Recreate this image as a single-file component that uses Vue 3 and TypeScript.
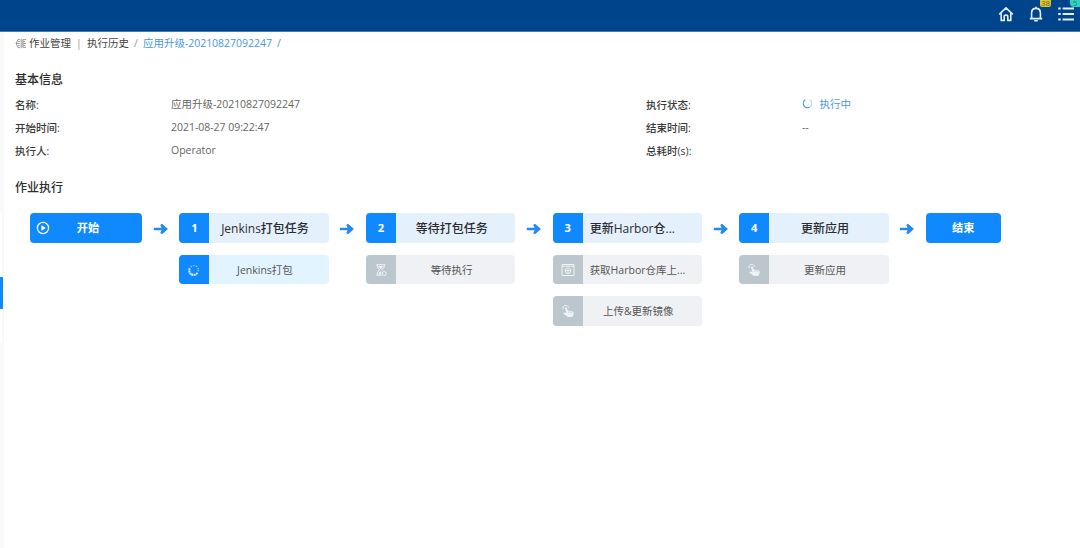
<script setup lang="ts">
interface Task {
  name: string
  icon: 'spin' | 'wait' | 'box' | 'hand'
  active?: boolean
  long?: boolean
}

interface Stage {
  title: string
  long?: boolean
  tasks: Task[]
}

const leftInfo = [
  { label: '名称:', value: '应用升级-20210827092247' },
  { label: '开始时间:', value: '2021-08-27 09:22:47' },
  { label: '执行人:', value: 'Operator' },
]

const rightInfo = [
  { label: '执行状态:', value: '执行中', running: true },
  { label: '结束时间:', value: '--', running: false },
  { label: '总耗时(s):', value: '', running: false },
]

const stages: Stage[] = [
  { title: 'Jenkins打包任务', tasks: [{ name: 'Jenkins打包', icon: 'spin', active: true }] },
  { title: '等待打包任务', tasks: [{ name: '等待执行', icon: 'wait' }] },
  {
    title: '更新Harbor仓...',
    long: true,
    tasks: [
      { name: '获取Harbor仓库上...', icon: 'box', long: true },
      { name: '上传&更新镜像', icon: 'hand' },
    ],
  },
  { title: '更新应用', tasks: [{ name: '更新应用', icon: 'hand' }] },
]
</script>

<template>
  <div class="page">
    <header class="topbar">
      <svg class="top-icon" viewBox="0 0 16 16">
        <path d="M1.2 8.4 8 1.9l6.8 6.5M3.2 7.2v7.2h3V10.6q0-1.6 1.8-1.6t1.8 1.6v3.8h3V7.2" />
      </svg>
      <div class="badge-wrap">
        <svg class="top-icon" viewBox="0 0 16 16">
          <path d="M8 .8v1.4M1.8 12.6h12.4M3.6 12.4V7q0-4.6 4.4-4.6T12.4 7v5.4M6.2 14.8h3.6" />
        </svg>
        <span class="badge amber">38</span>
      </div>
      <div class="badge-wrap">
        <svg class="top-icon list" viewBox="0 0 16 16">
          <path d="M4.6 2.5H16M4.6 8H16M4.6 13.5H16M.2 2.5h2.5M.2 8h2.5M.2 13.5h2.5" />
        </svg>
        <span class="badge teal">5</span>
      </div>
    </header>

    <div class="body">
      <aside class="rail">
        <div class="rail-group"><i class="rail-active"></i></div>
      </aside>

      <main class="main">
        <nav class="crumbs">
          <svg class="crumb-icon" viewBox="0 0 12 12">
            <path d="M4.8 1.5H2.7L.7 6l2 4.5h2.1M.7 6h4M2.6 3.7h2.2M2.6 8.3h2.2M6.2 1v10M11.5 1.8H8v8.4h3.5M8 6h3.5M8 3.9h2.5M8 8.1h2.5" />
          </svg>
          <span>作业管理</span>
          <span class="sep bar">|</span>
          <span>执行历史</span>
          <span class="sep">/</span>
          <span class="current">应用升级-20210827092247</span>
          <span class="sep current">/</span>
        </nav>

        <h2 class="heading">基本信息</h2>
        <div class="info">
          <dl class="col">
            <div v-for="r in leftInfo" :key="r.label" class="row">
              <dt>{{ r.label }}</dt>
              <dd>{{ r.value }}</dd>
            </div>
          </dl>
          <dl class="col">
            <div v-for="r in rightInfo" :key="r.label" class="row">
              <dt>{{ r.label }}</dt>
              <dd :class="{ running: r.running }">
                <svg v-if="r.running" class="status-spin" viewBox="0 0 12 12">
                  <path class="faint" d="M8 1.7A4.6 4.6 0 0 1 8.4 9.9" />
                  <path d="M8.4 9.9A4.6 4.6 0 0 1 3.6 2" />
                </svg>{{ r.value }}
              </dd>
            </div>
          </dl>
        </div>

        <h2 class="heading second">作业执行</h2>
        <section class="flow">
          <div class="node start">
            <svg class="play" viewBox="0 0 14 14">
              <circle cx="7" cy="7" r="5.6" />
              <path d="M5.4 4.3v5.4L9.9 7z" />
            </svg>
            <span>开始</span>
          </div>

          <template v-for="(s, i) in stages" :key="s.title">
            <div class="link">
              <svg viewBox="0 0 16 12"><path d="M.8 4.8h7.8L7.2 2 9 .8l6 5.2-6 5.2L7.2 10l1.4-2.8H.8z" /></svg>
            </div>
            <div class="stage">
              <div class="card title">
                <b class="tag">{{ i + 1 }}</b>
                <span class="name" :class="{ long: s.long }">{{ s.title }}</span>
              </div>
              <div v-for="t in s.tasks" :key="t.name" class="card task" :class="{ active: t.active }">
                <span class="tag">
                  <svg v-if="t.icon === 'spin'" class="glyph" viewBox="0 0 14 14">
                    <circle class="dots" cx="7" cy="7" r="4.4" />
                    <path class="thick" d="M2.7 5.4A4.4 4.4 0 0 0 10.4 9.8" />
                  </svg>
                  <svg v-else-if="t.icon === 'wait'" class="glyph" viewBox="0 0 14 14">
                    <path d="M2.3 1.7h9M3.3 2v1.5q0 1.6 2.6 3.2-2.6 1.6-2.6 4V12M10.3 2v1.5q0 1.6-2.6 3.2l.8.7M2.3 12.2h5.5" />
                    <path class="solid" d="M4 3h5.6L6.8 6zM4.4 11.6q.4-2.6 2.4-3.4l.8 3.4z" />
                    <circle cx="10.2" cy="10.5" r="2" />
                  </svg>
                  <svg v-else-if="t.icon === 'box'" class="glyph" viewBox="0 0 14 14">
                    <path d="M1 1.5h12v11H1zM1 3.2h12" />
                    <path d="M7 5l2.6 1.4v2.9L7 10.8 4.4 9.3V6.4zM4.4 6.4 7 7.8l2.6-1.4M7 7.8v3" />
                  </svg>
                  <svg v-else class="glyph" viewBox="0 0 14 14">
                    <path d="M2.3 5.2A2.7 2.7 0 1 1 7.4 3.8" />
                    <path class="solid" d="M3.9 3.8q.9-1.2 1.8 0l1.1 2.7 4.7 1q1.4.4 1.2 1.8l-.6 2.3q-.5 1.5-1.9 1.5H7.6q-1 0-1.7-.8L2.2 9.4q.5-1.8 3.2-.4z" />
                    <path class="cut" d="M7.4 7.4v1.4M9.1 7.7v1.3M10.8 8.2v1.1" />
                  </svg>
                </span>
                <span class="name" :class="{ long: t.long }">{{ t.name }}</span>
              </div>
            </div>
          </template>

          <div class="link">
            <svg viewBox="0 0 16 12"><path d="M.8 4.8h7.8L7.2 2 9 .8l6 5.2-6 5.2L7.2 10l1.4-2.8H.8z" /></svg>
          </div>
          <div class="node end"><span>结束</span></div>
        </section>
      </main>
    </div>
  </div>
</template>

<style>
body {
  margin: 0;
  overflow: hidden;
}
</style>

<style scoped>
.page {
  width: 1080px;
  height: 548px;
  overflow: hidden;
  display: flex;
  flex-direction: column;
  background: #fff;
  color: #555;
  font: 10.5px/16px "Open Sans", "Noto Sans CJK SC", sans-serif;
}
svg {
  display: block;
  fill: none;
  stroke: currentColor;
}
.topbar {
  height: 32px;
  flex: none;
  box-sizing: border-box;
  padding: 0 6px 3px 0;
  display: flex;
  align-items: center;
  justify-content: flex-end;
  gap: 14px;
  color: #e4edf7;
  background: #00448b;
  border-bottom: 1px solid #4c7cad;
}
.top-icon {
  width: 16px;
  height: 16px;
  stroke-width: 1.6;
}
.list {
  stroke-width: 1.9;
}
.badge-wrap {
  position: relative;
}
.badge {
  position: absolute;
  top: -6px;
  height: 7px;
  font-size: 8px;
  line-height: 6px;
  text-align: center;
}
.amber {
  left: 12px;
  width: 11px;
  color: #5e662f;
  background: #e4c42c;
  border-radius: 0 0 2px 2px;
}
.teal {
  left: 12px;
  width: 10px;
  color: #15877c;
  background: #35d0bd;
  border-radius: 0 0 0 4px;
}
.body {
  flex: 1;
  display: flex;
}
.rail {
  width: 4px;
  background: #f9f9f9;
}
.rail-group {
  width: 2px;
  height: 66px;
  margin-top: 181px;
  padding-top: 64px;
  background: #fff;
}
.rail-active {
  display: block;
  width: 3px;
  height: 32px;
  background: #1089ff;
}
.main {
  flex: 1;
  padding: 3px 0 0 11px;
}
.crumbs {
  display: flex;
  align-items: center;
  height: 16px;
  color: #444;
}
.crumb-icon {
  width: 12px;
  height: 11px;
  margin-right: 2px;
  color: #8f8f8f;
}
.sep {
  width: 14px;
  text-align: center;
  color: #999;
}
.bar {
  width: 16px;
}
.current {
  color: #4a96e0;
  letter-spacing: -0.03px;
}
.heading {
  margin: 19px 0 0;
  font-size: 12px;
  font-weight: 500;
  line-height: 20px;
  color: #2c2c2c;
}
.info {
  display: flex;
  margin-top: 3px;
}
.col {
  margin: 0;
  width: 631px;
  flex: none;
}
.col + .col {
  width: 400px;
}
.row {
  display: flex;
  height: 23.3px;
  align-items: center;
}
dt {
  width: 156px;
  font-weight: 500;
  color: #3a3a3a;
}
dd {
  margin: 0 0 2px;
  display: flex;
  align-items: center;
  color: #666;
  letter-spacing: -0.03px;
}
.running {
  color: #4a96e0;
}
.status-spin {
  width: 11px;
  height: 11px;
  margin-right: 6.5px;
  stroke-width: 1.3;
}
.faint {
  opacity: 0.35;
}
.second {
  margin-top: 15px;
}
.flow {
  display: flex;
  align-items: flex-start;
  margin: 15px 0 0 15px;
}
.node {
  height: 30px;
  display: flex;
  align-items: center;
  border-radius: 4px;
  background: #1089ff;
  color: #fff;
  font-size: 11.2px;
  font-weight: 700;
}
.node span {
  flex: 1;
  padding-top: 1px;
  text-align: center;
}
.start {
  width: 112px;
}
.start span {
  padding-right: 15px;
}
.end {
  width: 74.6px;
}
.play {
  width: 14px;
  height: 14px;
  margin-left: 6px;
  margin-right: -1px;
  stroke-width: 1.2;
}
.play path {
  fill: #fff;
  stroke: none;
}
.link {
  width: 37.35px;
  height: 33px;
  display: flex;
  align-items: center;
  justify-content: center;
}
.link svg {
  width: 16px;
  height: 12px;
  fill: #238bef;
  stroke: none;
}
.stage {
  width: 149.3px;
  display: flex;
  flex-direction: column;
  gap: 12px;
}
.card {
  height: 29.8px;
  display: flex;
  border-radius: 4px;
  overflow: hidden;
  background: #f0f1f5;
}
.tag {
  width: 30px;
  flex: none;
  display: flex;
  align-items: center;
  justify-content: center;
  background: #bcc6cd;
  color: #f0f3f5;
}
.name {
  flex: 1;
  padding: 0 15px 0 7px;
  line-height: 30px;
  text-align: center;
  white-space: nowrap;
}
.name.long {
  text-align: left;
}
.title {
  background: #e5f0fd;
  color: #2c2c2c;
  font-size: 12px;
  font-weight: 500;
}
.title .name {
  line-height: 32px;
}
.title .tag,
.active .tag {
  background: #1089ff;
  color: #fff;
}
.title .tag {
  font-size: 11.2px;
  font-weight: 700;
}
.task.active {
  background: #e2f4ff;
}
.glyph {
  width: 14px;
  height: 14px;
  stroke-width: 1;
}
.solid {
  fill: currentColor;
  stroke: none;
}
.cut {
  stroke: #bcc6cd;
  stroke-width: 0.7;
}
.dots {
  stroke-width: 1.5;
  stroke-dasharray: 1.4 1.36;
  opacity: 0.5;
}
.thick {
  stroke-width: 2;
  stroke-dasharray: 1.8 0.5;
  opacity: 0.75;
}
</style>
